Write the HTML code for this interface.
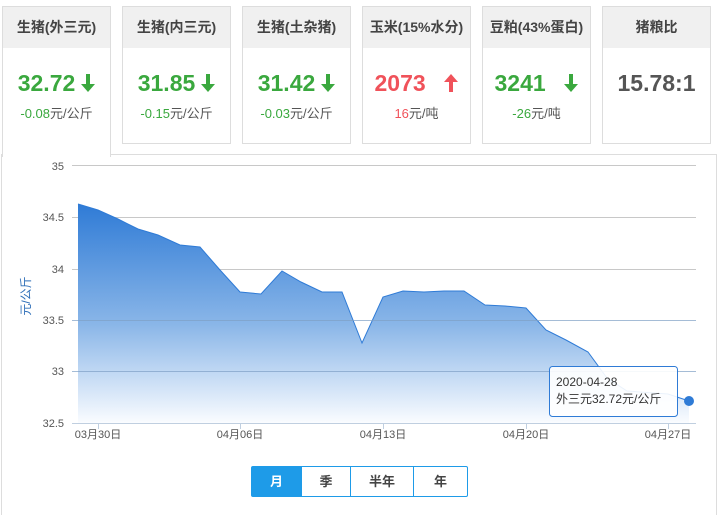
<!DOCTYPE html>
<html><head><meta charset="utf-8"><style>
body{margin:0;width:720px;height:505px;background:#fff;font-family:"Liberation Sans","Noto Sans CJK SC",sans-serif;position:relative;overflow:hidden}
.card{position:absolute;top:6px;width:107px;height:136px;border:1px solid #ddd;background:#fff;text-align:center}
.card .h{height:41px;background:#f0f0f0;line-height:41px;font-size:14px;font-weight:bold;color:#444}
.card .v{margin-top:22px;font-size:23px;font-weight:bold;line-height:26px}
.card .d{margin-top:7px;font-size:13px;color:#555}
.g{color:#3aa83e}.r{color:#f0525a}
.arr{display:inline-block;vertical-align:-1px;margin-left:6px}
.panel{position:absolute;left:1px;top:154px;width:714px;height:360px;border:1px solid #ddd;border-bottom:none}
.btns{position:absolute;left:251px;top:466px;height:29px;border:1px solid #1e9be8;border-radius:2px;display:flex;font-size:13px;font-weight:bold;color:#444}
.btns div{line-height:29px;text-align:center;border-left:1px solid #1e9be8}
</style></head><body>
<div class="panel"></div>
<div class="card" style="left:2px;height:150px;border-bottom:none"><div class="h">生猪(外三元)</div><div class="v g">32.72<svg class="arr" width="14" height="18" viewBox="0 0 14 18"><path d="M5 0h4v10h5l-7 8-7-8h5z" fill="#3aa83e"/></svg></div><div class="d"><span class="g">-0.08</span>元/公斤</div></div>
<div class="card" style="left:122px"><div class="h">生猪(内三元)</div><div class="v g">31.85<svg class="arr" width="14" height="18" viewBox="0 0 14 18"><path d="M5 0h4v10h5l-7 8-7-8h5z" fill="#3aa83e"/></svg></div><div class="d"><span class="g">-0.15</span>元/公斤</div></div>
<div class="card" style="left:242px"><div class="h">生猪(土杂猪)</div><div class="v g">31.42<svg class="arr" width="14" height="18" viewBox="0 0 14 18"><path d="M5 0h4v10h5l-7 8-7-8h5z" fill="#3aa83e"/></svg></div><div class="d"><span class="g">-0.03</span>元/公斤</div></div>
<div class="card" style="left:362px"><div class="h">玉米(15%水分)</div><div class="v r">2073 &nbsp;<svg class="arr" width="14" height="18" viewBox="0 0 14 18"><path d="M5 18h4v-10h5l-7-8-7 8h5z" fill="#f0525a"/></svg></div><div class="d"><span class="r">16</span>元/吨</div></div>
<div class="card" style="left:482px"><div class="h">豆粕(43%蛋白)</div><div class="v g">3241 &nbsp;<svg class="arr" width="14" height="18" viewBox="0 0 14 18"><path d="M5 0h4v10h5l-7 8-7-8h5z" fill="#3aa83e"/></svg></div><div class="d"><span class="g">-26</span>元/吨</div></div>
<div class="card" style="left:602px"><div class="h">猪粮比</div><div class="v" style="color:#555">15.78:1</div></div>
<svg style="position:absolute;left:0;top:0" width="720" height="505">
<defs><linearGradient id="gr" x1="0" y1="0" x2="0" y2="1"><stop offset="0" stop-color="#2f7bd6"/><stop offset="0.55" stop-color="#8ab6e8"/><stop offset="1" stop-color="#fafcff"/></linearGradient></defs>
<g stroke="#c8c8c8" stroke-width="1"><line x1="72" y1="165.5" x2="696" y2="165.5"/><line x1="72" y1="217.5" x2="696" y2="217.5"/><line x1="72" y1="269.5" x2="696" y2="269.5"/></g>
<polygon fill="url(#gr)" points="78,423 78,204 98,210 118,219 138,229 158,235 180,245 200,247 220,270 240,292 261,294 282,271 301,282 322,292 342,292 362,343 383,297 403,291 424,292 444,291 464,291 485,305 505,306 526,308 546,330 566,340 588,352 607,378 627,391 668,394 689,401 689,423"/>
<polyline fill="none" stroke="#2f7bd6" stroke-width="1" points="78,204 98,210 118,219 138,229 158,235 180,245 200,247 220,270 240,292 261,294 282,271 301,282 322,292 342,292 362,343 383,297 403,291 424,292 444,291 464,291 485,305 505,306 526,308 546,330 566,340 588,352 607,378 627,391 668,394 689,401"/>
<g stroke="#7f9fc4" stroke-opacity="0.7"><line x1="72" y1="320.5" x2="696" y2="320.5"/><line x1="72" y1="371.5" x2="696" y2="371.5"/></g>
<line x1="72" y1="423.5" x2="696" y2="423.5" stroke="#c0cfe0"/>
<g stroke="#c0cfe0"><line x1="98.5" y1="423" x2="98.5" y2="429"/><line x1="240.5" y1="423" x2="240.5" y2="429"/><line x1="383.5" y1="423" x2="383.5" y2="429"/><line x1="526.5" y1="423" x2="526.5" y2="429"/><line x1="668.5" y1="423" x2="668.5" y2="429"/></g>
<g font-size="11" fill="#555" text-anchor="end" font-family="Liberation Sans,sans-serif"><text x="64" y="170">35</text><text x="64" y="221">34.5</text><text x="64" y="273">34</text><text x="64" y="324">33.5</text><text x="64" y="375">33</text><text x="64" y="427">32.5</text></g>
<g font-size="11" fill="#555" text-anchor="middle"><text x="98" y="438">03月30日</text><text x="240" y="438">04月06日</text><text x="383" y="438">04月13日</text><text x="526" y="438">04月20日</text><text x="668" y="438">04月27日</text></g>
<text transform="translate(30,296) rotate(-90)" font-size="12" fill="#2f6fb8" text-anchor="middle">元/公斤</text>
<circle cx="689" cy="401" r="5" fill="#2f7bd6"/>
<rect x="549.5" y="366.5" width="128" height="50" rx="3" fill="#fff" fill-opacity="0.9" stroke="#2f7bd6"/>
<g font-size="12" fill="#333"><text x="556" y="386">2020-04-28</text><text x="556" y="403">外三元32.72元/公斤</text></g>
</svg>
<div class="btns"><div style="width:49px;background:#1e9be8;color:#fff;border-left:none">月</div><div style="width:48px">季</div><div style="width:62px">半年</div><div style="width:53px">年</div></div>
</body></html>
